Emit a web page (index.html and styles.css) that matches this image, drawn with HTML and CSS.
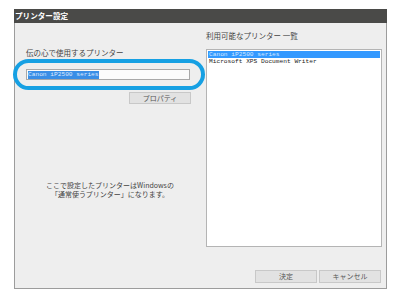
FILE: index.html
```html
<!DOCTYPE html>
<html lang="ja">
<head>
<meta charset="utf-8">
<link rel="stylesheet" href="styles.css">
</head>
<body>
<div class="window">
  <div class="titlebar">プリンター設定</div>
  <div class="content">
    <div class="left">
      <div class="label">伝の心で使用するプリンター</div>
      <div class="field"><span class="sel">Canon iP2500 series</span></div>
      <div class="btnrow"><div class="btn prop">プロパティ</div></div>
      <div class="note">ここで設定したプリンターはWindowsの<br>「通常使うプリンター」になります。</div>
      <div class="highlight"></div>
    </div>
    <div class="right">
      <div class="label rlabel">利用可能なプリンター 一覧</div>
      <div class="listbox">
        <div class="item selected">Canon iP2500 series</div>
        <div class="item">Microsoft XPS Document Writer</div>
      </div>
      <div class="actions">
        <div class="btn act">決定</div>
        <div class="btn act">キャンセル</div>
      </div>
    </div>
  </div>
</div>
</body>
</html>
```

FILE: styles.css
```css
html, body {
  margin: 0;
  padding: 0;
  background: #ffffff;
}
body {
  font-family: "Noto Sans CJK JP", "Noto Sans", sans-serif;
  color: #333;
}
.window {
  margin: 9px 0 0 14px;
  width: 373px;
  height: 280px;
  box-sizing: border-box;
  background: #eeeeee;
  border: 1px solid #9c9c9c;
  border-top: none;
  display: flex;
  flex-direction: column;
}
.titlebar {
  height: 14px;
  line-height: 14px;
  margin: 0 -1px;
  background: #4a4a48;
  color: #ffffff;
  font-size: 7.6px;
  font-weight: bold;
  padding-left: 1px;
}
.content {
  flex: 1;
  display: flex;
}
.left {
  position: relative;
  width: 190px;
  box-sizing: border-box;
  padding: 25px 15px 0 11px;
  display: flex;
  flex-direction: column;
}
.label {
  font-size: 7.5px;
  line-height: 10px;
  color: #444;
  white-space: nowrap;
}
.field {
  margin-top: 11px;
  height: 11px;
  box-sizing: border-box;
  border: 1px solid #a8a8a8;
  background: #fbfbfb;
  display: flex;
  align-items: center;
  padding-left: 1px;
}
.sel {
  background: #3a8ee6;
  color: #dfe9ff;
  font-family: "Liberation Mono", monospace;
  font-size: 6.2px;
  line-height: 8px;
}
.btnrow {
  margin-top: 12px;
  display: flex;
  justify-content: flex-end;
}
.btn {
  height: 12px;
  box-sizing: border-box;
  border: 1px solid #c8c8c8;
  background: #e2e2e2;
  font-size: 7px;
  line-height: 10px;
  text-align: center;
  color: #555;
}
.prop {
  width: 62px;
  margin-right: -1px;
}
.note {
  margin-top: 77px;
  font-size: 7px;
  line-height: 9px;
  text-align: center;
  color: #444;
  white-space: nowrap;
  margin-left: -11px;
  margin-right: -15px;
}
.highlight {
  position: absolute;
  left: -2px;
  top: 36px;
  width: 192px;
  height: 31px;
  box-sizing: border-box;
  border: 4px solid #16a0e3;
  border-radius: 16px;
}
.right {
  margin-left: 1px;
  width: 176px;
  display: flex;
  flex-direction: column;
}
.rlabel {
  margin-top: 8px;
  margin-bottom: 8px;
}
.listbox {
  height: 198px;
  box-sizing: border-box;
  background: #ffffff;
  border: 1px solid #b4b4b4;
  padding: 1px 1px;
}
.item {
  font-family: "Liberation Mono", monospace;
  font-size: 6.2px;
  line-height: 7px;
  height: 7px;
  color: #222;
  padding-left: 1px;
  white-space: nowrap;
}
.item.selected {
  background: #3399ff;
  color: #d4e8ff;
}
.actions {
  margin-top: 23px;
  display: flex;
  justify-content: flex-end;
  gap: 2px;
  margin-right: 1px;
}
.act {
  width: 62px;
  height: 13px;
  line-height: 11px;
}
```
